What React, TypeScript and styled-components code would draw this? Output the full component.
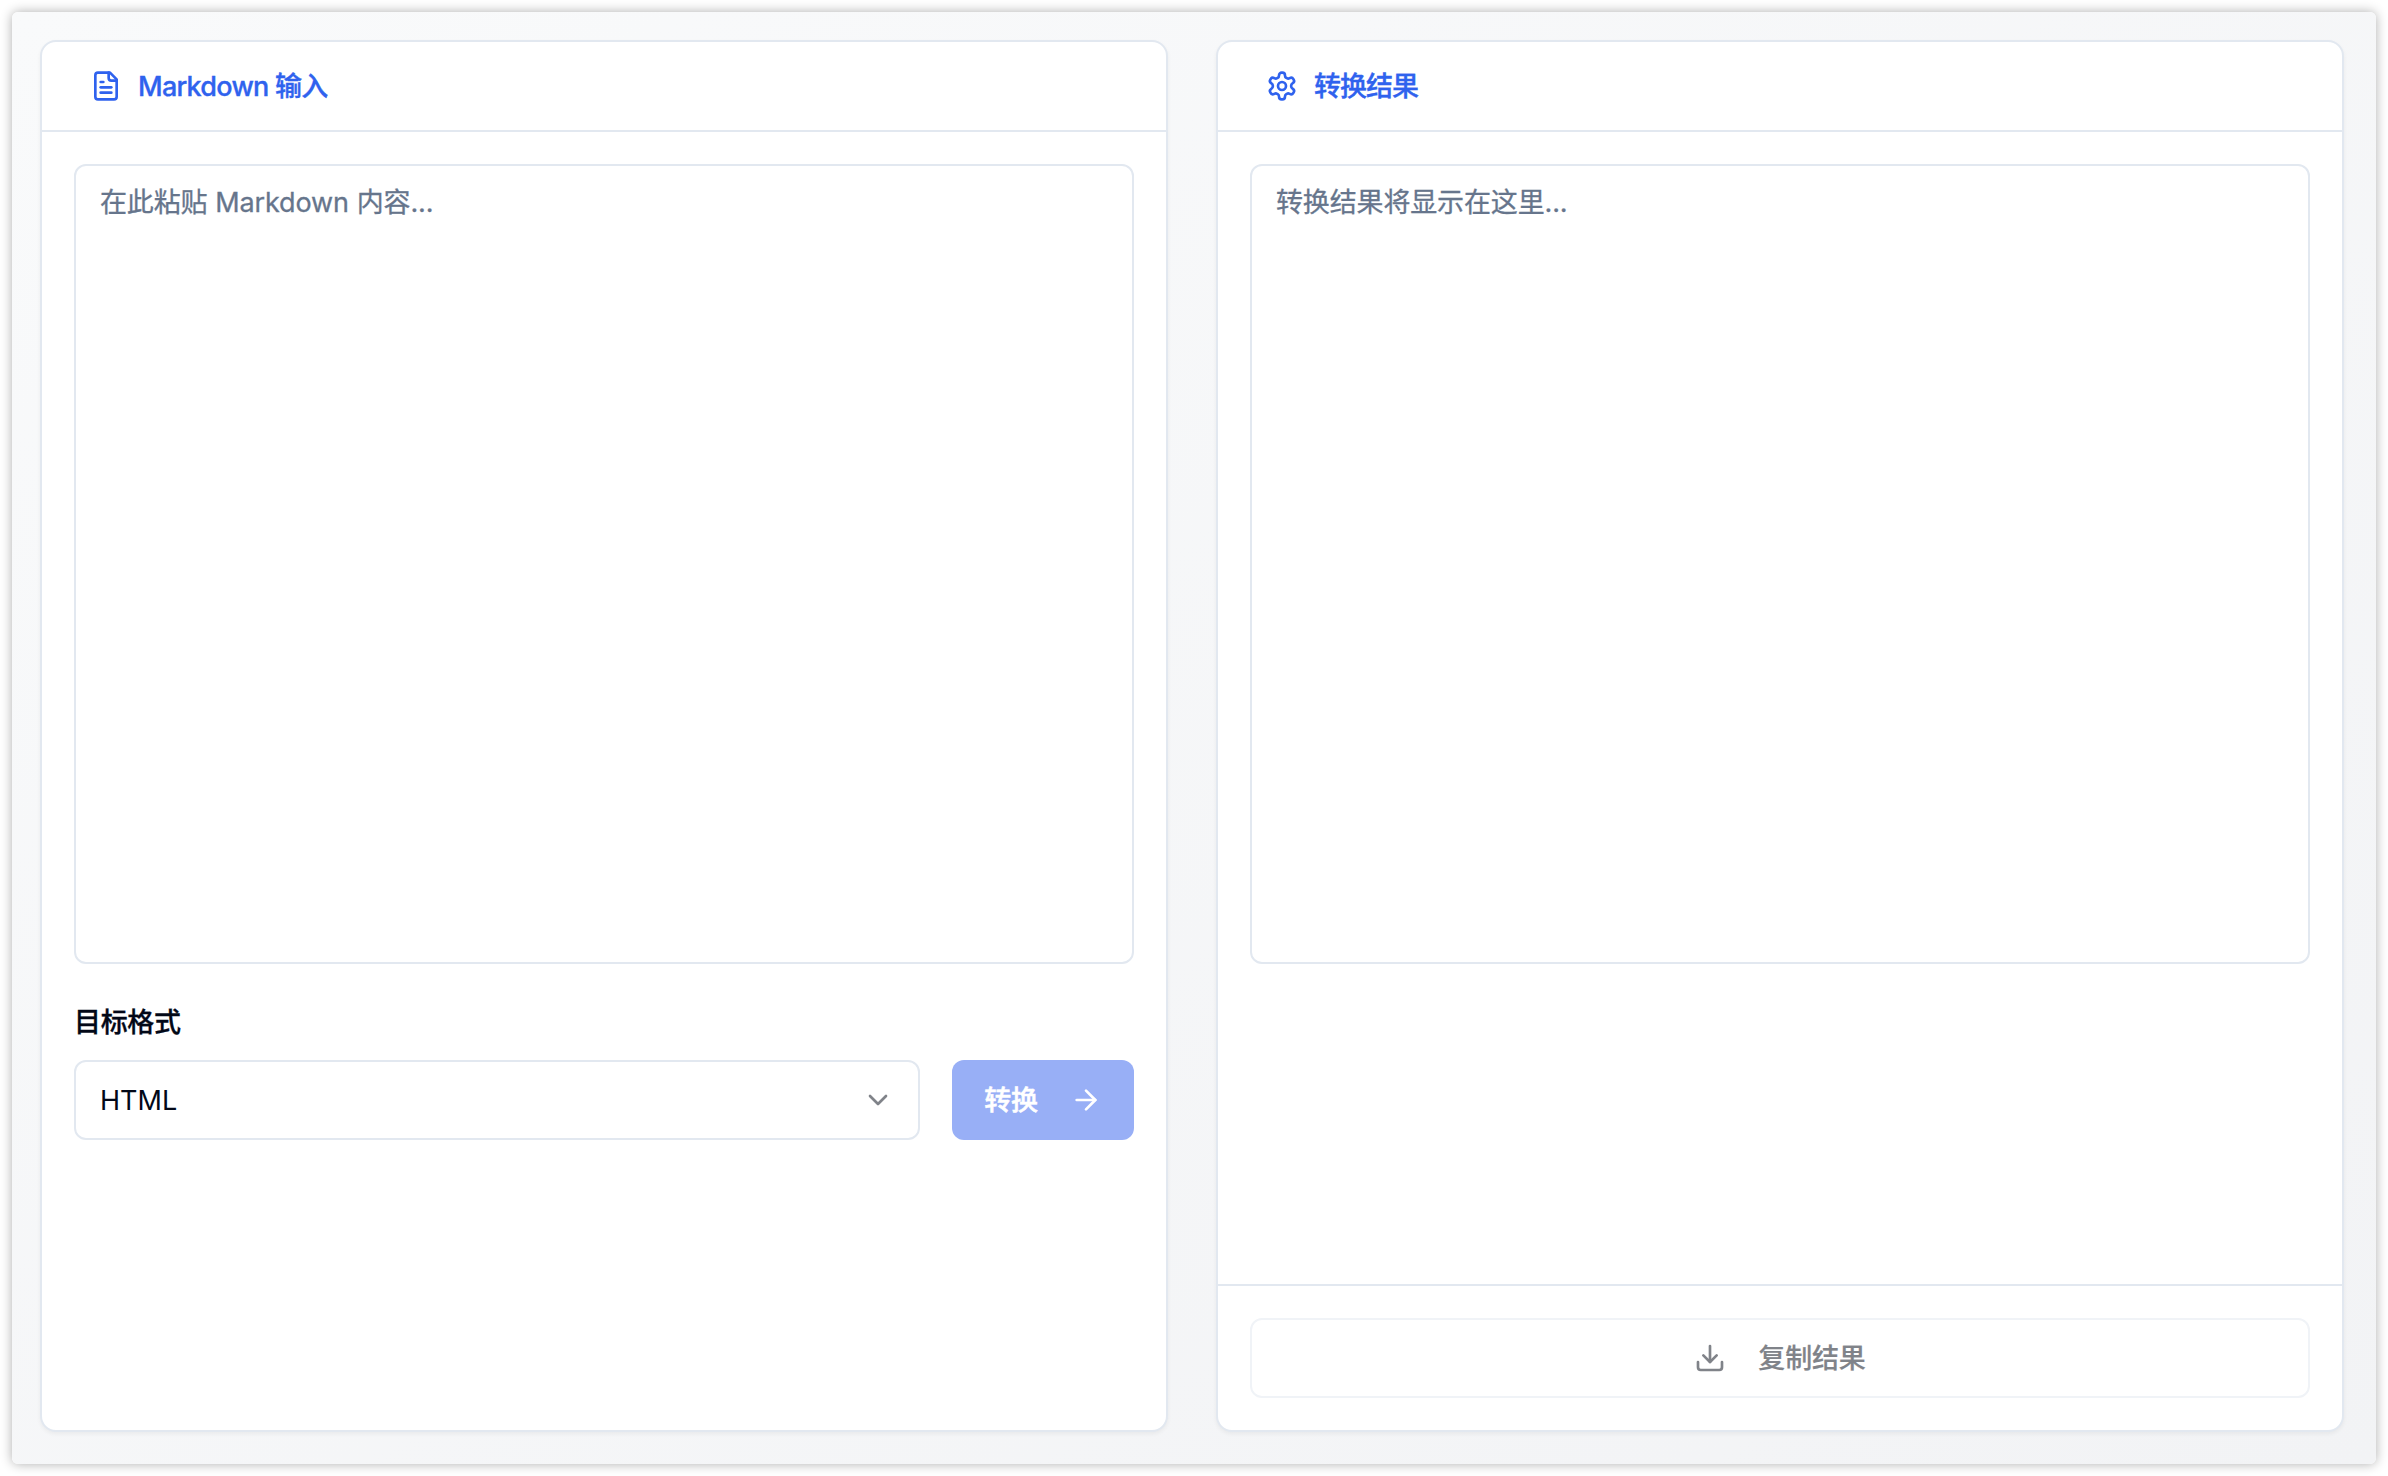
import React from "react";
import styled, { createGlobalStyle, css } from "styled-components";

const color = {
  primary: "#2f62ee",
  primaryMuted: "#98aff6",
  border: "#e2e8f0",
  borderMuted: "#f0f3f7",
  placeholder: "#66758c",
  text: "#020817",
  textMuted: "#808389",
};

const GlobalStyle = createGlobalStyle`
  *, *::before, *::after { box-sizing: border-box; }
  html, body { margin: 0; background: #ffffff; }
  body {
    font-family: Inter, "Noto Sans CJK SC", sans-serif;
    font-size: 27px;
    line-height: 40px;
    letter-spacing: -0.15px;
    color: ${color.text};
    -webkit-font-smoothing: antialiased;
  }
`;

const Page = styled.div`
  width: 100%;
  height: 1476px;
  padding: 12px;
`;

const Window = styled.main`
  display: grid;
  grid-template-columns: 1fr 1fr;
  gap: 48px;
  height: 100%;
  padding: 28px 32px 32px 28px;
  border-radius: 6px;
  background: linear-gradient(to bottom right, #f9fafb, #f2f3f5);
  box-shadow: 0 0 12px rgba(0, 0, 0, 0.32);
`;

const Card = styled.section`
  display: flex;
  flex-direction: column;
  border: 2px solid ${color.border};
  border-radius: 16px;
  background: #ffffff;
  box-shadow: 0 2px 4px rgba(0, 0, 0, 0.05);
`;

const CardHeader = styled.header`
  display: flex;
  align-items: center;
  gap: 16px;
  height: 90px;
  padding: 0 48px;
  border-bottom: 2px solid ${color.border};
  color: ${color.primary};
`;

const CardTitle = styled.h2<{ $tracking: number }>`
  margin: 0;
  padding-top: 2px;
  font-size: 27px;
  font-weight: 500;
  letter-spacing: ${(p) => p.$tracking}px;
  white-space: pre;
  -webkit-text-stroke: 0.35px currentColor;
`;

const CardBody = styled.div`
  display: flex;
  flex: 1;
  flex-direction: column;
  padding: 32px;
`;

const CardFooter = styled.footer`
  padding: 32px;
  border-top: 2px solid ${color.border};
`;

const outlined = css`
  border: 2px solid ${color.border};
  border-radius: 12px;
`;

const TextPane = styled.div`
  ${outlined}
  height: 800px;
  padding: 17px 24px;
  color: ${color.placeholder};
  white-space: pre;
  word-spacing: 0.5px;
  -webkit-text-stroke: 0.3px currentColor;
`;

const Field = styled.div`
  display: flex;
  flex-direction: column;
  gap: 17px;
  margin-top: 39px;
`;

const FieldLabel = styled.label`
  font-weight: 500;
  letter-spacing: -0.35px;
  -webkit-text-stroke: 0.3px currentColor;
`;

const FieldRow = styled.div`
  display: flex;
  gap: 32px;
`;

const Select = styled.div`
  ${outlined}
  display: flex;
  flex: 1;
  align-items: center;
  justify-content: space-between;
  height: 80px;
  padding: 0 24px;
`;

const Value = styled.span`
  padding-top: 1px;
  letter-spacing: 0;
`;

const Button = styled.button<{ $outline?: boolean }>`
  display: flex;
  align-items: center;
  justify-content: center;
  gap: 32px;
  width: ${(p) => (p.$outline ? "100%" : "182px")};
  height: 80px;
  padding: 0 30px;
  border: ${(p) => (p.$outline ? `2px solid ${color.borderMuted}` : "none")};
  border-radius: 12px;
  background: ${(p) => (p.$outline ? "#ffffff" : color.primaryMuted)};
  color: ${(p) => (p.$outline ? color.textMuted : "#ffffff")};
  font: inherit;
  font-weight: 500;
  letter-spacing: inherit;
  -webkit-text-stroke: ${(p) => (p.$outline ? "0.2px" : "0.5px")} currentColor;
`;

const ButtonText = styled.span`
  padding-top: 2px;
`;

const Svg = styled.svg<{ $tone?: string }>`
  flex: none;
  width: 32px;
  height: 32px;
  fill: none;
  stroke: ${(p) => p.$tone ?? "currentColor"};
  stroke-width: 2;
  stroke-linecap: round;
  stroke-linejoin: round;
`;

const FileIcon = () => (
  <Svg viewBox="0 0 24 24">
    <path d="M15 2H6a2 2 0 0 0-2 2v16a2 2 0 0 0 2 2h12a2 2 0 0 0 2-2V7Z" />
    <path d="M14 2v4a2 2 0 0 0 2 2h4" />
    <path d="M10 9H8" />
    <path d="M16 13H8" />
    <path d="M16 17H8" />
  </Svg>
);

const GearIcon = () => (
  <Svg viewBox="0 0 24 24">
    <path d="M12.22 2h-.44a2 2 0 0 0-2 2v.18a2 2 0 0 1-1 1.73l-.43.25a2 2 0 0 1-2 0l-.15-.08a2 2 0 0 0-2.73.73l-.22.38a2 2 0 0 0 .73 2.73l.15.1a2 2 0 0 1 1 1.72v.51a2 2 0 0 1-1 1.74l-.15.09a2 2 0 0 0-.73 2.73l.22.38a2 2 0 0 0 2.73.73l.15-.08a2 2 0 0 1 2 0l.43.25a2 2 0 0 1 1 1.73V20a2 2 0 0 0 2 2h.44a2 2 0 0 0 2-2v-.18a2 2 0 0 1 1-1.73l.43-.25a2 2 0 0 1 2 0l.15.08a2 2 0 0 0 2.73-.73l.22-.39a2 2 0 0 0-.73-2.73l-.15-.08a2 2 0 0 1-1-1.74v-.5a2 2 0 0 1 1-1.74l.15-.09a2 2 0 0 0 .73-2.73l-.22-.38a2 2 0 0 0-2.73-.73l-.15.08a2 2 0 0 1-2 0l-.43-.25a2 2 0 0 1-1-1.73V4a2 2 0 0 0-2-2z" />
    <circle cx="12" cy="12" r="3" />
  </Svg>
);

const ChevronIcon = () => (
  <Svg viewBox="0 0 24 24" $tone={color.textMuted}>
    <path d="m6 9 6 6 6-6" />
  </Svg>
);

const ArrowIcon = () => (
  <Svg viewBox="0 0 24 24">
    <path d="M5 12h14" />
    <path d="m12 5 7 7-7 7" />
  </Svg>
);

const DownloadIcon = () => (
  <Svg viewBox="0 0 24 24">
    <path d="M21 15v4a2 2 0 0 1-2 2H5a2 2 0 0 1-2-2v-4" />
    <path d="m7 10 5 5 5-5" />
    <path d="M12 15V3" />
  </Svg>
);

export default function App() {
  return (
    <>
      <GlobalStyle />
      <Page>
        <Window>
          <Card>
            <CardHeader>
              <FileIcon />
              <CardTitle $tracking={-0.75}>Markdown 输入</CardTitle>
            </CardHeader>
            <CardBody>
              <TextPane>在此粘贴 Markdown 内容...</TextPane>
              <Field>
                <FieldLabel>目标格式</FieldLabel>
                <FieldRow>
                  <Select>
                    <Value>HTML</Value>
                    <ChevronIcon />
                  </Select>
                  <Button>
                    <ButtonText>转换</ButtonText>
                    <ArrowIcon />
                  </Button>
                </FieldRow>
              </Field>
            </CardBody>
          </Card>
          <Card>
            <CardHeader>
              <GearIcon />
              <CardTitle $tracking={-1}>转换结果</CardTitle>
            </CardHeader>
            <CardBody>
              <TextPane>转换结果将显示在这里...</TextPane>
            </CardBody>
            <CardFooter>
              <Button $outline>
                <DownloadIcon />
                <ButtonText>复制结果</ButtonText>
              </Button>
            </CardFooter>
          </Card>
        </Window>
      </Page>
    </>
  );
}
